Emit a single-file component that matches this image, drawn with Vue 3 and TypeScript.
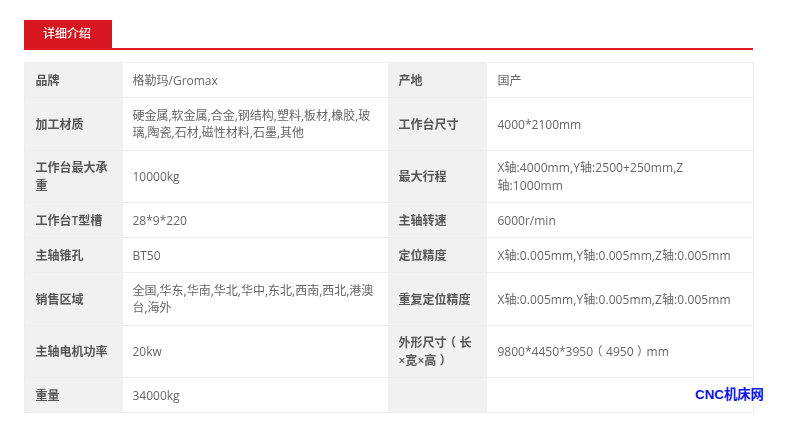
<script setup lang="ts">
interface Row {
  a: string
  b: string
  c: string
  d: string
  tall?: boolean
}
const rows: Row[] = [
  { a: '品牌', b: '格勒玛/Gromax', c: '产地', d: '国产' },
  { a: '加工材质', b: '硬金属,软金属,合金,钢结构,塑料,板材,橡胶,玻璃,陶瓷,石材,磁性材料,石墨,其他', c: '工作台尺寸', d: '4000*2100mm', tall: true },
  { a: '工作台最大承重', b: '10000kg', c: '最大行程', d: 'X轴:4000mm,Y轴:2500+250mm,Z轴:1000mm', tall: true },
  { a: '工作台T型槽', b: '28*9*220', c: '主轴转速', d: '6000r/min' },
  { a: '主轴锥孔', b: 'BT50', c: '定位精度', d: 'X轴:0.005mm,Y轴:0.005mm,Z轴:0.005mm' },
  { a: '销售区域', b: '全国,华东,华南,华北,华中,东北,西南,西北,港澳台,海外', c: '重复定位精度', d: 'X轴:0.005mm,Y轴:0.005mm,Z轴:0.005mm', tall: true },
  { a: '主轴电机功率', b: '20kw', c: '外形尺寸（长×宽×高）', d: '9800*4450*3950（4950）mm', tall: true },
  { a: '重量', b: '34000kg', c: '', d: '' },
]

function parts(text: string): string[] {
  return text.split(/([（）]|(?=×))/).filter((s) => s && s.length > 0)
}
function isBracket(s: string): boolean {
  return s === '（' || s === '）'
}
</script>

<template>
  <div class="page">
    <div class="content">
      <div class="head">
        <div class="tab">详细介绍</div>
      </div>
      <table class="spec">
        <colgroup>
          <col class="c1" />
          <col class="c2" />
          <col class="c3" />
          <col class="c4" />
        </colgroup>
        <tbody>
          <tr v-for="(r, i) in rows" :key="i" :class="{ tall: r.tall }">
            <th>{{ r.a }}</th>
            <td>{{ r.b }}</td>
            <th><span v-for="(s, j) in parts(r.c)" :key="j" :class="{ bracket: isBracket(s) }">{{ s }}</span></th>
            <td :class="{ axis: r.d.includes('轴') }"><span v-for="(s, j) in parts(r.d)" :key="j" :class="{ bracket: isBracket(s) }">{{ s }}</span></td>
          </tr>
        </tbody>
      </table>
    </div>
    <div class="mark">CNC机床网</div>
  </div>
</template>

<style scoped>
.page {
  position: relative;
  width: 800px;
  height: 424px;
  overflow: hidden;
  background: #fff;
  font-family: "Open Sans", "Noto Sans CJK SC", sans-serif;
  font-size: 12px;
  color: #666;
}
.content {
  width: 729px;
  margin-left: 24px;
  padding-top: 20px;
  filter: blur(0.45px);
}
.head {
  height: 28px;
  border-bottom: 2px solid #dd1c26;
  display: flex;
}
.tab {
  width: 88px;
  height: 28px;
  line-height: 28px;
  padding-left: 19px;
  box-sizing: border-box;
  background: #d8161f;
  color: #fff;
  font-weight: 500;
}
.spec {
  margin-top: 12px;
  width: 729px;
  table-layout: fixed;
  border-collapse: collapse;
  border: 1px solid #eee;
}
.c1 { width: 98px; }
.c2 { width: 265px; }
.c3 { width: 99px; }
.c4 { width: 267px; }
tr {
  height: 35px;
}
tr.tall {
  height: 52.5px;
}
th,
td {
  border: 1px solid #eee;
  border-left: 0;
  border-right: 0;
  padding: 1px 10px 0;
  line-height: 17.5px;
  text-align: left;
  font-weight: 400;
}
th {
  background: #f1f1f1;
  font-weight: 600;
  color: #555;
  padding-left: 10.5px;
  padding-right: 11px;
}
tr > :nth-child(n + 3) {
  padding-left: 11px;
}
td.axis {
  letter-spacing: 0.08px;
}
.bracket {
  font-feature-settings: "halt";
  text-spacing-trim: space-all;
  margin: 0 3.5px;
}
.mark {
  position: absolute;
  left: 695px;
  top: 387px;
  font-family: "Liberation Sans", "Noto Sans CJK SC", sans-serif;
  font-size: 13.33px;
  line-height: 16px;
  font-weight: 700;
  color: #0a14e6;
}
</style>
